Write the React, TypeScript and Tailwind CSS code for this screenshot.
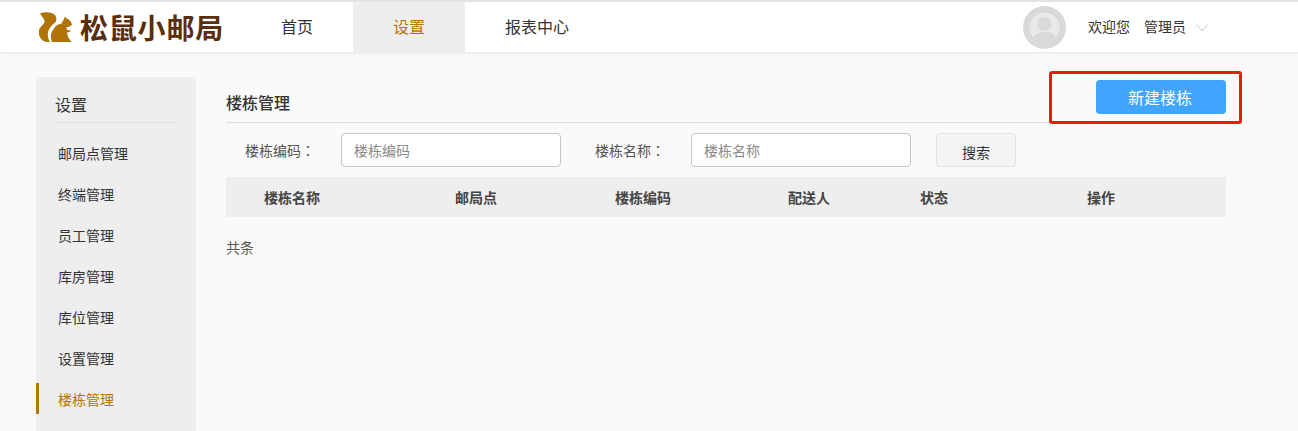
import React from "react";

const font = "font-['Noto_Sans_CJK_SC','Liberation_Sans',sans-serif]";

const menuItems = ["邮局点管理", "终端管理", "员工管理", "库房管理", "库位管理", "设置管理", "楼栋管理"];

// left offset of each column is set by the width of the one before it
const columns = [
  { title: "楼栋名称", width: "w-[191px]" },
  { title: "邮局点", width: "w-[160px]" },
  { title: "楼栋编码", width: "w-[173px]" },
  { title: "配送人", width: "w-[132px]" },
  { title: "状态", width: "w-[167px]" },
  { title: "操作", width: "w-[100px]" },
];

const SquirrelLogo = () => (
  <svg width="35" height="32" viewBox="39 12 35 32" fill="#b07406">
    <path d="M40 14.5 C44 12.5 52 12.5 55 16 C57 19 56.5 21.5 55.5 23 C52 26 48 30 47.8 35 C47.8 38 48.5 41 50 43 L47 43 C42 43 38.7 38 38.7 33 C38.7 28 43.5 26.5 44.5 23 C45 20 42 18 40 14.5 Z" />
    <path d="M52 43 C50.5 38 50 34.5 54 29.5 C55 28 56.5 26 58 25.5 L61 25 L63.5 21 L65 17.5 L66.5 19.5 C69 20 71.7 23 72 26 L68.5 28 L66.5 28 L67 31 L71 31.5 L69.5 33 L67 33.5 L68 38 L71.5 43 Z" />
  </svg>
);

const Avatar = () => (
  <svg width="43" height="43" viewBox="0 0 43 43">
    <circle cx="21.5" cy="21.5" r="21.5" fill="#d9d9d9" />
    <circle cx="21.5" cy="21.5" r="15" fill="#e9e9e9" />
    <circle cx="21.5" cy="18" r="7" fill="#d9d9d9" />
    <path d="M9 36 C10 28 15 26 21.5 26 C28 26 33 28 34 36 C27 40 16 40 9 36 Z" fill="#d9d9d9" />
  </svg>
);

const Header = () => (
  <div className="relative z-10 flex h-[53px] items-center border-t-2 border-[#e3e3e3] border-b border-b-[#ececec] bg-white pl-[39px] shadow-[0_1px_3px_rgba(0,0,0,0.05)]">
    <div className="flex w-[202px] items-center">
      <SquirrelLogo />
      <span className="ml-[6px] text-[28px] leading-none font-bold tracking-[0.8px] text-[#5a2d0c]">松鼠小邮局</span>
    </div>
    <div className="flex h-full text-base text-[#333]">
      <div className="flex items-center px-10 pb-[2px]">首页</div>
      <div className="flex items-center bg-[#eeeeee] px-10 pb-[2px] text-[#b57700]">设置</div>
      <div className="flex items-center px-10 pb-[2px]">报表中心</div>
    </div>
    <div className="ml-[414px] flex items-center text-sm text-[#333]">
      <Avatar />
      <span className="mb-[2px] ml-[22px]">欢迎您</span>
      <span className="mb-[2px] ml-[14px]">管理员</span>
      <svg className="mt-[1px] ml-[10px]" width="12" height="8" viewBox="0 0 12 8" fill="none" stroke="#c8c8c8" strokeWidth="1">
        <path d="M0.5 0.5 L6 7 L11.5 0.5" />
      </svg>
    </div>
  </div>
);

const Sidebar = () => (
  <div className="h-[400px] w-[160px] shrink-0 bg-[#eeeeee] px-5">
    <div className="flex h-[46px] items-center border-b border-[#dddddd] pt-[9px] text-base text-[#333]">
      <span className="-ml-px">设置</span>
    </div>
    <div className="mt-[14px] flex flex-col">
      {menuItems.map((item, index) => {
        const active = index === menuItems.length - 1;
        return (
          <div
            key={item}
            className={`-ml-5 flex h-[31px] items-center pl-[22px] text-sm ${index > 0 ? "mt-[10px]" : ""} ${
              active ? "border-l-[3px] border-[#b57700] !pl-[19px] text-[#b57700]" : "text-[#333]"
            }`}
          >
            {item}
          </div>
        );
      })}
    </div>
  </div>
);

const Colon = () => <span className="font-['Noto_Sans_CJK_TC',sans-serif]">：</span>;

const Content = () => (
  <div className="ml-[30px] w-[1000px]">
    <div className="flex h-[46px] items-start justify-between border-b border-[#dddddd]">
      <span className="mt-[13px] text-base font-medium text-[#333]">楼栋管理</span>
      <button className="mt-[3px] h-[34px] w-[130px] rounded-sm bg-[#3fa5ff] pr-[2px] text-base text-white">新建楼栋</button>
    </div>
    <div className="mt-[10px] flex h-[34px] items-center text-sm text-[#555]">
      <span className="ml-[19px] w-[96px]">
        楼栋编码
        <Colon />
      </span>
      <input
        placeholder="楼栋编码"
        className="h-[34px] w-[220px] rounded border border-[#c6c6c6] bg-white px-3 text-sm placeholder:text-[#8a8a8a]"
      />
      <span className="ml-[34px] w-[96px]">
        楼栋名称
        <Colon />
      </span>
      <input
        placeholder="楼栋名称"
        className="h-[34px] w-[220px] rounded border border-[#c6c6c6] bg-white px-3 text-sm placeholder:text-[#8a8a8a]"
      />
      <button className="ml-[25px] h-[34px] w-[80px] rounded-sm border border-[#e3e3e3] bg-[#f4f4f6] pt-1 text-sm text-[#333]">搜索</button>
    </div>
    <div className="mt-[10px] flex h-10 items-center bg-[#eeeeee] pl-[38px] font-bold text-[#444]">
      {columns.map((col) => (
        <div key={col.title} className={`${col.width} text-sm`}>
          {col.title}
        </div>
      ))}
    </div>
    <div className="mt-[20px] text-sm text-[#555]">共条</div>
  </div>
);

export default function App() {
  return (
    <div className={`relative h-[431px] w-[1298px] overflow-hidden bg-[#fafafa] ${font}`}>
      <Header />
      <div className="flex pt-6 pl-9">
        <Sidebar />
        <Content />
      </div>
      {/* red annotation box drawn over the screenshot */}
      <div className="absolute top-[71px] left-[1049px] h-[53px] w-[193px] rounded-[3px] border-[3px] border-[#f5170f]" />
    </div>
  );
}
